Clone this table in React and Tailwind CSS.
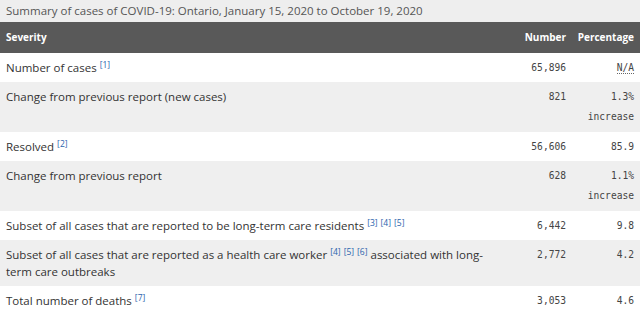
import React from 'react';

const rows = [
  { label: 'Number of cases', refs: ['1'], number: '65,896', pct: 'N/A', abbr: true },
  { label: 'Change from previous report (new cases)', number: '821', pct: '1.3%', sub: 'increase' },
  { label: 'Resolved', refs: ['2'], number: '56,606', pct: '85.9' },
  { label: 'Change from previous report', number: '628', pct: '1.1%', sub: 'increase' },
  { label: 'Subset of all cases that are reported to be long-term care residents', refs: ['3', '4', '5'], number: '6,442', pct: '9.8' },
  { label: 'Subset of all cases that are reported as a health care worker', refs: ['4', '5', '6'], after: ' associated with long-term care outbreaks', number: '2,772', pct: '4.2' },
  { label: 'Total number of deaths', refs: ['7'], number: '3,053', pct: '4.6' },
];

const Refs = ({ refs }) => (
  <>
    {refs.map((r) => (
      <React.Fragment key={r}>
        {' '}
        <sup className="text-[8.5px] text-[#2a64ad] leading-none">[{r}]</sup>
      </React.Fragment>
    ))}
  </>
);

const App = () => {
  return (
    <div className="w-[640px] h-[315px] overflow-hidden bg-white font-['Open_Sans',sans-serif]">
      <table className="w-full table-fixed border-collapse text-[11.5px] text-[#333]">
        <caption className="caption-top text-left bg-[#eeeeee] text-[#555] h-[22px] px-[6px] leading-[22px] text-[11.5px]">
          Summary of cases of COVID-19: Ontario, January 15, 2020 to October 19, 2020
        </caption>
        <colgroup>
          <col className="w-[506px]" />
          <col className="w-[67px]" />
          <col className="w-[67px]" />
        </colgroup>
        <thead>
          <tr className="bg-[#595959] text-white text-[10px] font-bold h-[31px]">
            <th className="text-left px-[6px]">Severity</th>
            <th className="text-right pr-[7px]">Number</th>
            <th className="text-right pr-[6px]">Percentage</th>
          </tr>
        </thead>
        <tbody>
          {rows.map((row, idx) => (
            <tr key={idx} className={idx % 2 === 0 ? 'bg-white' : 'bg-[#efefef]'}>
              <td className="align-top px-[6px] py-[6px] leading-[17px]">
                {row.label}
                {row.refs && <Refs refs={row.refs} />}
                {row.after}
              </td>
              <td className="align-top pr-[7px] py-[6px] text-right font-['DejaVu_Sans_Mono',monospace] text-[9.6px] leading-[17px] text-[#444]">
                {row.number}
              </td>
              <td className="align-top pr-[6px] py-[6px] text-right font-['DejaVu_Sans_Mono',monospace] text-[9.6px] leading-[17px] text-[#444]">
                {row.abbr ? (
                  <abbr className="no-underline border-b border-dotted border-[#666]">{row.pct}</abbr>
                ) : (
                  row.pct
                )}
                {row.sub && <div className="leading-[19px] mt-[2px]">{row.sub}</div>}
              </td>
            </tr>
          ))}
        </tbody>
      </table>
    </div>
  );
};

export default App;
